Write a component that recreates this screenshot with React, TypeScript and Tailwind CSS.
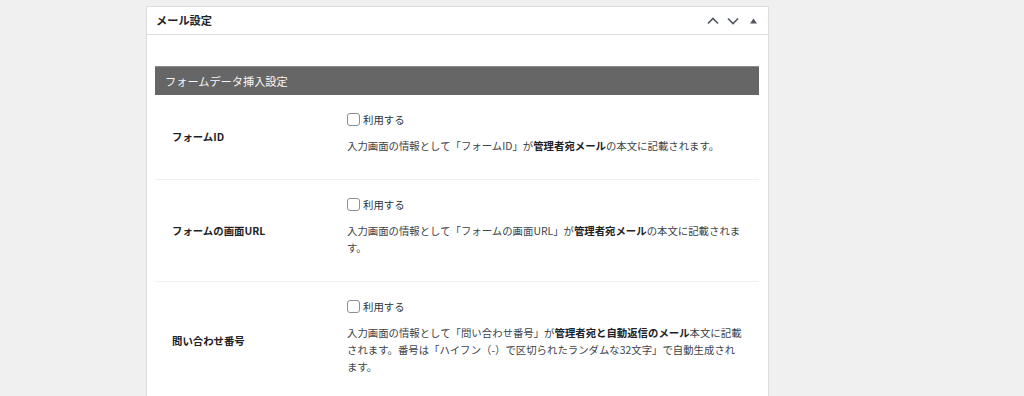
import React from "react";

const FONT = "font-['Noto_Sans_CJK_JP','Noto_Sans',sans-serif]";

function Checkbox() {
  return (
    <label className="flex h-[17px] items-center gap-[3px] text-[10.4px] leading-[17px] text-[#2c3338]">
      <span className="h-[13px] w-[13px] shrink-0 rounded-[3px] border border-[#8c8f94] bg-white" />
      利用する
    </label>
  );
}

interface RowProps {
  label: string;
  children: React.ReactNode;
  last?: boolean;
}

function Row({ label, children, last }: RowProps) {
  return (
    <div className={"grid grid-cols-[192px_1fr] " + (last ? "" : "border-b border-[#f0f0f1]")}>
      <div className="flex items-center pl-[17px] text-[10.4px] font-bold text-[#1d2327]">{label}</div>
      <div className="pt-[16px] pb-[25px] pr-[15px]">
        <Checkbox />
        <p className="mt-[9px] text-[10.4px] leading-[17px] text-[#3c434a]">{children}</p>
      </div>
    </div>
  );
}

export default function App() {
  return (
    <div className={"h-[396px] w-[1024px] overflow-hidden bg-[#f0f0f1] " + FONT}>
      <div className="ml-[146px] mt-[6px] w-[623px] border border-[#dcdcde] bg-white">
        <div className="flex h-[28px] items-center border-b border-[#dcdcde] pl-[9px] pr-[5px]">
          <h2 className="text-[11.2px] font-bold text-[#1d2327]">メール設定</h2>
          <div className="ml-auto flex items-center text-[#50575e]">
            <span className="flex h-[20px] w-[20px] items-center justify-center">
              <svg width="12" height="8" viewBox="0 0 12 8" fill="none">
                <path d="M1 6.5 6 1.5 11 6.5" stroke="currentColor" strokeWidth="1.6" />
              </svg>
            </span>
            <span className="flex h-[20px] w-[20px] items-center justify-center">
              <svg width="12" height="8" viewBox="0 0 12 8" fill="none">
                <path d="M1 1.5 6 6.5 11 1.5" stroke="currentColor" strokeWidth="1.6" />
              </svg>
            </span>
            <span className="flex h-[20px] w-[20px] items-center justify-center">
              <svg width="7" height="6" viewBox="0 0 7 6">
                <path d="M3.5 0.5 7 5.5H0Z" fill="currentColor" />
              </svg>
            </span>
          </div>
        </div>

        <div className="pl-[8px] pr-[9px] pt-[31px]">
          <div className="flex h-[29px] items-center border-t border-[#8c8c8c] bg-[#666666] pl-[10px] text-[11.2px] text-[#f6f7f7]">
            フォームデータ挿入設定
          </div>

          <Row label="フォームID">
            入力画面の情報として「フォームID」が<b className="text-[#1d2327]">管理者宛メール</b>の本文に記載されます。
          </Row>
          <Row label="フォームの画面URL">
            入力画面の情報として「フォームの画面URL」が<b className="text-[#1d2327]">管理者宛メール</b>の本文に記載されます。
          </Row>
          <Row label="問い合わせ番号" last>
            入力画面の情報として「問い合わせ番号」が<b className="text-[#1d2327]">管理者宛と自動返信のメール</b>本文に記載されます。番号は「ハイフン（-）で区切られたランダムな32文字」で自動生成されます。
          </Row>
        </div>
      </div>
    </div>
  );
}
